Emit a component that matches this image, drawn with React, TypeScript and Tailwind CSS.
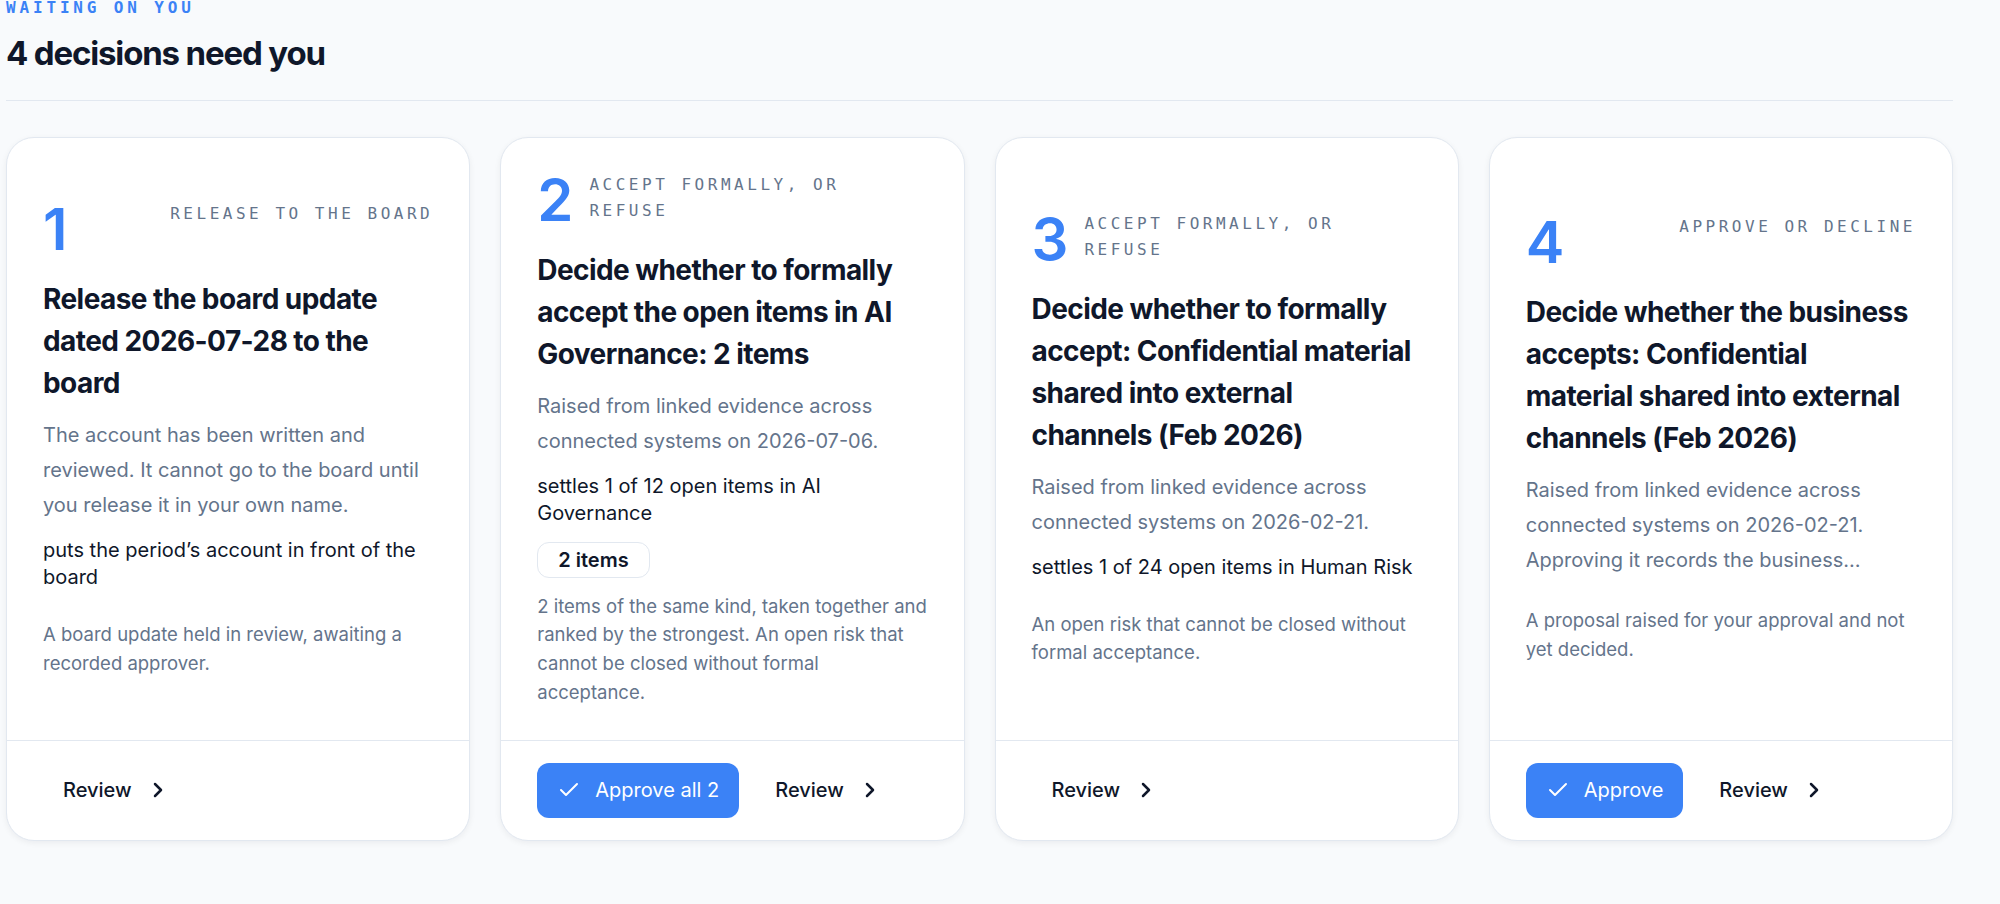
import { Check, ChevronRight } from 'lucide-react'

interface Decision {
  num: number
  label: string
  title: string
  desc: string
  settles?: string
  chip?: string
  note: string
  approve?: string
}

const decisions: Decision[] = [
  {
    num: 1,
    label: 'RELEASE TO THE BOARD',
    title: 'Release the board update\ndated 2026-07-28 to the\nboard',
    desc: 'The account has been written and\nreviewed. It cannot go to the board until\nyou release it in your own name.',
    settles: 'puts the period\u2019s account in front of the\nboard',
    note: 'A board update held in review, awaiting a\nrecorded approver.',
  },
  {
    num: 2,
    label: 'ACCEPT FORMALLY, OR\nREFUSE',
    title: 'Decide whether to formally\naccept the open items in AI\nGovernance: 2 items',
    desc: 'Raised from linked evidence across\nconnected systems on 2026-07-06.',
    settles: 'settles 1 of 12 open items in AI\nGovernance',
    chip: '2 items',
    note: '2 items of the same kind, taken together and\nranked by the strongest. An open risk that\ncannot be closed without formal\nacceptance.',
    approve: 'Approve all 2',
  },
  {
    num: 3,
    label: 'ACCEPT FORMALLY, OR\nREFUSE',
    title: 'Decide whether to formally\naccept: Confidential material\nshared into external\nchannels (Feb 2026)',
    desc: 'Raised from linked evidence across\nconnected systems on 2026-02-21.',
    settles: 'settles 1 of 24 open items in Human Risk',
    note: 'An open risk that cannot be closed without\nformal acceptance.',
  },
  {
    num: 4,
    label: 'APPROVE OR DECLINE',
    title: 'Decide whether the business\naccepts: Confidential\nmaterial shared into external\nchannels (Feb 2026)',
    desc: 'Raised from linked evidence across\nconnected systems on 2026-02-21.\nApproving it records the business\u2026',
    note: 'A proposal raised for your approval and not\nyet decided.',
    approve: 'Approve',
  },
]

function DecisionCard({ d }: { d: Decision }) {
  // a label that wraps takes the rest of the row, a short one sits at the right
  const wraps = d.label.includes('\n')

  return (
    <div className="flex flex-col rounded-[28px] border border-[#e2e8f0] bg-white shadow-[0_2px_6px_rgba(15,23,42,0.06)]">
      {/* Body */}
      <div className="flex flex-1 flex-col justify-center px-9 py-[33px]">
        <div className="mb-5 flex items-start justify-between gap-4">
          <span className="text-[58px] font-semibold leading-none text-[#3b82f6]">{d.num}</span>
          <span
            className={
              wraps
                ? "mt-[1px] flex-1 whitespace-pre font-['DejaVu_Sans_Mono',monospace] text-[16px] leading-[26px] tracking-[0.22em] text-[#64748b]"
                : "mt-[1px] whitespace-pre font-['DejaVu_Sans_Mono',monospace] text-[16px] leading-[26px] tracking-[0.22em] text-[#64748b]"
            }
          >
            {d.label}
          </span>
        </div>

        <div className="flex flex-col gap-[14px]">
          <h3 className="whitespace-pre text-[28px] font-bold leading-[42px] tracking-[-0.02em] text-[#0f172a]">
            {d.title}
          </h3>
          <p className="whitespace-pre text-[20px] leading-[35px] text-[#64748b]">{d.desc}</p>
          {d.settles && (
            <p className="whitespace-pre text-[20px] leading-[27.5px] text-[#0f172a]">{d.settles}</p>
          )}
          {d.chip && (
            <span className="flex h-[36px] items-center self-start rounded-xl border border-[#e2e8f0] px-5 text-[20px] font-semibold text-[#0f172a]">
              {d.chip}
            </span>
          )}
          <p
            className={
              d.chip
                ? 'whitespace-pre text-[18.5px] leading-[28.8px] text-[#64748b]'
                : 'mt-[14px] whitespace-pre text-[18.5px] leading-[28.8px] text-[#64748b]'
            }
          >
            {d.note}
          </p>
        </div>
      </div>

      {/* Footer */}
      <div className="flex items-center gap-4 border-t border-[#e2e8f0] px-9 py-[22px]">
        {d.approve && (
          <button className="flex h-[55px] items-center gap-[14px] rounded-[12px] bg-[#3b82f6] px-5 text-[20px] text-white">
            <Check size={24} strokeWidth={2} />
            {d.approve}
          </button>
        )}
        <button className="flex h-[55px] items-center gap-[14px] px-5 text-[20px] font-medium text-[#0f172a]">
          Review
          <ChevronRight size={24} strokeWidth={2.5} />
        </button>
      </div>
    </div>
  )
}

export default function App() {
  return (
    <div className="min-h-screen bg-[#f8fafc] font-['Inter',sans-serif]">
      <div className="w-[1953px] pl-[6px]">
        <div className="font-['DejaVu_Sans_Mono',monospace] text-[16px] font-bold leading-none tracking-[0.24em] text-[#3b82f6]">
          WAITING ON YOU
        </div>
        <h1 className="mt-[18px] text-[33px] font-bold leading-[1.2] tracking-[-0.035em] text-[#0f172a]">
          4 decisions need you
        </h1>
        <div className="mt-[26px] border-t border-[#e2e8f0]" />

        <div className="mt-[36px] grid grid-cols-4 gap-[30px]">
          {decisions.map((d) => (
            <DecisionCard key={d.num} d={d} />
          ))}
        </div>
      </div>
    </div>
  )
}
